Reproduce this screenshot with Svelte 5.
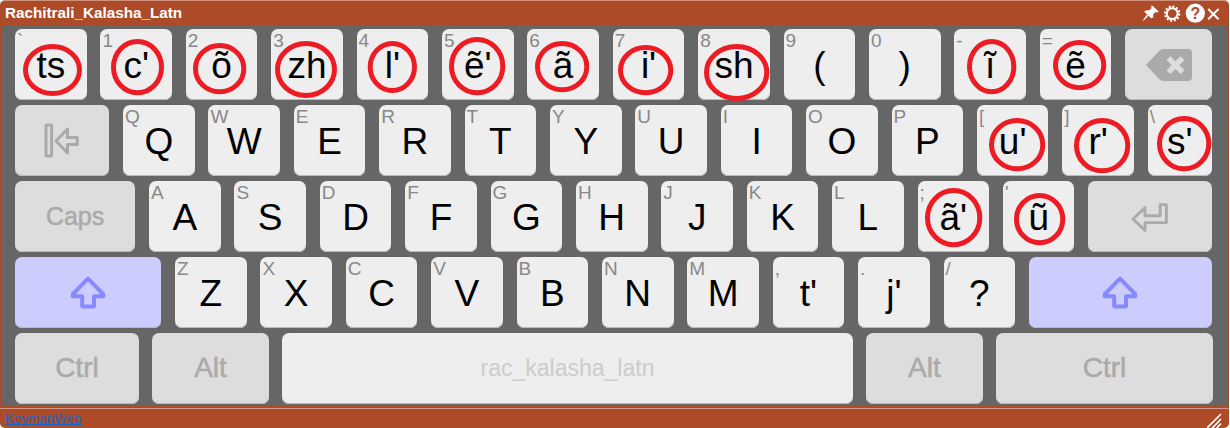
<script>
  const keys = (hints, caps) => caps.map((cap, i) => ({ hint: hints[i], cap }));
  const rows = [
    [...keys([...'`1234567890-='], ['ts', "c'", 'õ', 'zh', "l'", "ẽ'", 'ã', "i'", 'sh', '(', ')', 'ĩ', 'ẽ']), { icon: 'bksp', kind: 'special', grow: true }],
    [{ icon: 'tab', kind: 'special', w: 94.2 }, ...keys([...'QWERTYUIOP[]'], [...'QWERTYUIOP', "u'", "r'"]), { hint: '\\', cap: "s'", grow: true }],
    [{ label: 'Caps', kind: 'special', w: 120.2, small: true }, ...keys([..."ASDFGHJKL;'"], [...'ASDFGHJKL', "ã'", 'ũ']), { icon: 'enter', kind: 'special', grow: true }],
    [{ icon: 'shift', kind: 'shift', w: 146.2 }, ...keys([...'ZXCVBNM,./'], [...'ZXCVBNM', "t'", "j'", '?']), { icon: 'shift', kind: 'shift', grow: true }],
    [{ label: 'Ctrl', kind: 'special', w: 124 }, { label: 'Alt', kind: 'special', w: 116.8 }, { label: 'rac_kalasha_latn', kind: 'space', w: 571 }, { label: 'Alt', kind: 'special', w: 116.6 }, { label: 'Ctrl', kind: 'special', w: 217.6 }]
  ];
  // outer bounds of each highlight ring: left, top, right, bottom
  const rings = [
    [23, 44, 82, 96], [111, 39, 164, 95.3], [193, 43, 246.3, 94.3], [275, 41, 337, 98],
    [367.7, 41, 417, 93], [449, 37, 505.3, 95.3], [535, 41, 589.3, 92.3], [618, 45, 673.3, 95.3],
    [704, 44, 769.3, 101], [967, 39, 1016.3, 94.3], [1053, 40, 1106.3, 90.3],
    [989, 118, 1045.3, 171.3], [1074, 118, 1130.3, 173.3], [1157, 116, 1211.3, 171.3],
    [925, 188, 982.3, 247.3], [1014, 193, 1065.3, 245.3]
  ];
</script>

<div class="osk">
  <header>
    <span class="title">Rachitrali_Kalasha_Latn</span>
    <svg class="tools" width="82" height="22" viewBox="0 0 82 22">
      <path d="M12.2 4.4 L18.8 10.4 L16.8 11.6 L15.6 11 L13.2 13.2 L13.3 16.2 L11.6 17.6 L8.4 14.7 L4.6 18.8 L2.8 19.8 L3.6 17.9 L7.2 13.5 L4.2 10.8 L5.8 9.4 L9.2 9.3 L11.7 7 L10.9 5.6 Z" fill="#fff" />
      <circle cx="32.2" cy="12.6" r="5.4" fill="none" stroke="#fff" stroke-width="2" />
      <circle cx="32.2" cy="12.6" r="7" fill="none" stroke="#fff" stroke-width="2.4" stroke-dasharray="1.9 1.765" />
      <circle cx="55.3" cy="12.2" r="9.6" fill="#fff" />
      <text x="55.3" y="17.6" text-anchor="middle" class="help">?</text>
      <path d="M68.2 8 L78.6 18.2 M78.6 8 L68.2 18.2" stroke="#fff" stroke-width="1.9" />
    </svg>
  </header>

  <main>
    {#each rows as row}
      <div class="row">
        {#each row as key}
          <div class="key {key.kind ?? ''}" class:grow={key.grow} class:small={key.small} style:width={key.grow ? null : `${key.w ?? 71.6}px`}>
            {#if key.hint}<span class="hint">{key.hint}</span>{/if}
            {#if key.cap}<span class="cap">{key.cap}</span>{/if}
            {#if key.label}<span class="label">{key.label}</span>{/if}
            {#if key.icon === 'bksp'}
              <svg width="46" height="32" viewBox="0 0 46 32">
                <path d="M0 16 L13 2 Q15 0 18 0 H42 Q46 0 46 4 V28 Q46 32 42 32 H18 Q15 32 13 30 Z" fill="#aaa" />
                <path d="M22.5 9.2 L36.5 23.2 M36.5 9.2 L22.5 23.2" stroke="#ddd" stroke-width="5.4" />
              </svg>
            {:else if key.icon === 'tab'}
              <svg class="tabicon" width="36" height="35" viewBox="0 0 36 35">
                <g fill="none" stroke="#aaa" stroke-width="3" stroke-linejoin="round">
                  <rect x="2" y="2" width="5.6" height="31" rx=".8" />
                  <path d="M12 18 L23.5 6 V14.6 H33.2 V21.4 H23.5 V30 Z" />
                </g>
              </svg>
            {:else if key.icon === 'enter'}
              <svg class="entericon" width="38" height="30" viewBox="0 0 38 30">
                <path d="M2 16 L14 4.6 V12.8 H29.2 V1.6 H35.4 V19.6 H14 V27.4 Z" fill="none" stroke="#aaa" stroke-width="2.9" stroke-linejoin="round" />
              </svg>
            {:else if key.icon === 'shift'}
              <svg class="shifticon" width="36" height="33" viewBox="0 0 36 33">
                <path d="M18 2.6 L33.2 18.2 V20.2 H24 V29.8 Q24 30.6 23.2 30.6 H13 Q12.2 30.6 12.2 29.8 V20.2 H2.8 V18.2 Z" fill="none" stroke="#88f" stroke-width="4" stroke-linejoin="round" />
              </svg>
            {/if}
          </div>
        {/each}
      </div>
    {/each}
  </main>

  <footer>
    <a href="#keymanweb">KeymanWeb</a>
    <svg width="16" height="16" viewBox="0 0 16 16">
      <path d="M0 15 L14 1 M4.5 16 L14 6 M9 16 L14 10.5" stroke="#fff" stroke-width="1.7" />
    </svg>
  </footer>

  <svg class="rings" width="1230" height="428" viewBox="0 0 1230 428">
    {#each rings as [l, t, r, b]}
      <ellipse cx={(l + r) / 2} cy={(t + b) / 2} rx={(r - l) / 2 - 2.5} ry={(b - t) / 2 - 2.5} />
    {/each}
  </svg>
</div>

<style>
  :global(body) { margin: 0; background: #fff; }
  .osk {
    position: relative;
    box-sizing: border-box;
    width: 1229px;
    height: 428px;
    display: flex;
    flex-direction: column;
    background: #ad4a28;
    border-top: 1px solid #cf917b;
    border-radius: 5px;
    overflow: hidden;
    font-family: "Liberation Sans", Arial, sans-serif;
  }
  header {
    height: 25px;
    display: flex;
    justify-content: space-between;
    padding: 0 7px 0 5px;
    color: #fff;
  }
  .title { font-weight: bold; font-size: 15.25px; line-height: 24px; }
  .help { font: bold 16px "Liberation Sans", Arial, sans-serif; fill: #ad4a28; }
  main {
    box-sizing: border-box;
    height: 380px;
    margin: 0 2px;
    padding: 3px 0 0 13px;
    background: #666;
    display: flex;
    flex-direction: column;
    gap: 5px;
  }
  .row { display: flex; gap: 13.8px; width: 1197px; height: 71px; }
  .row:last-child { gap: 13.1px; width: 1200px; }
  .key {
    position: relative;
    box-sizing: border-box;
    flex: none;
    height: 71px;
    display: flex;
    align-items: center;
    justify-content: center;
    border-radius: 7px;
    background: #eee;
    box-shadow: inset 0 -1px 0 #bbb;
    color: #000;
  }
  .grow { flex: 1; }
  .special { background: #ddd; color: #aaa; }
  .shift { background: #ccf; }
  .hint { position: absolute; left: 2px; top: 1px; font-size: 19px; line-height: 22px; color: #888; }
  .cap { font-size: 37px; line-height: 42px; padding-top: 2px; }
  .label { font-size: 28px; line-height: 32px; margin-top: -2px; -webkit-text-stroke: .5px #aaa; }
  .small .label { font-size: 25px; }
  .space .label { font-size: 23px; margin-top: -1px; color: #ccc; -webkit-text-stroke: 0; }
  .tabicon, .shifticon { margin-bottom: 1px; }
  .entericon { margin-top: 2px; }
  footer {
    box-sizing: border-box;
    margin-top: 2px;
    height: 20px;
    border-top: 1px solid #d39a85;
    display: flex;
    justify-content: space-between;
    padding: 2px 6px 0 5px;
  }
  footer a {
    color: #1a66c4;
    font-size: 13.4px;
    line-height: 16px;
    text-decoration-thickness: 1px;
    text-underline-offset: 1px;
    text-decoration-skip-ink: none;
  }
  footer svg { margin-top: 2px; }
  .rings { position: absolute; left: 0; top: -1px; pointer-events: none; }
  .rings ellipse { fill: none; stroke: #ed1c24; stroke-width: 5; }
</style>
